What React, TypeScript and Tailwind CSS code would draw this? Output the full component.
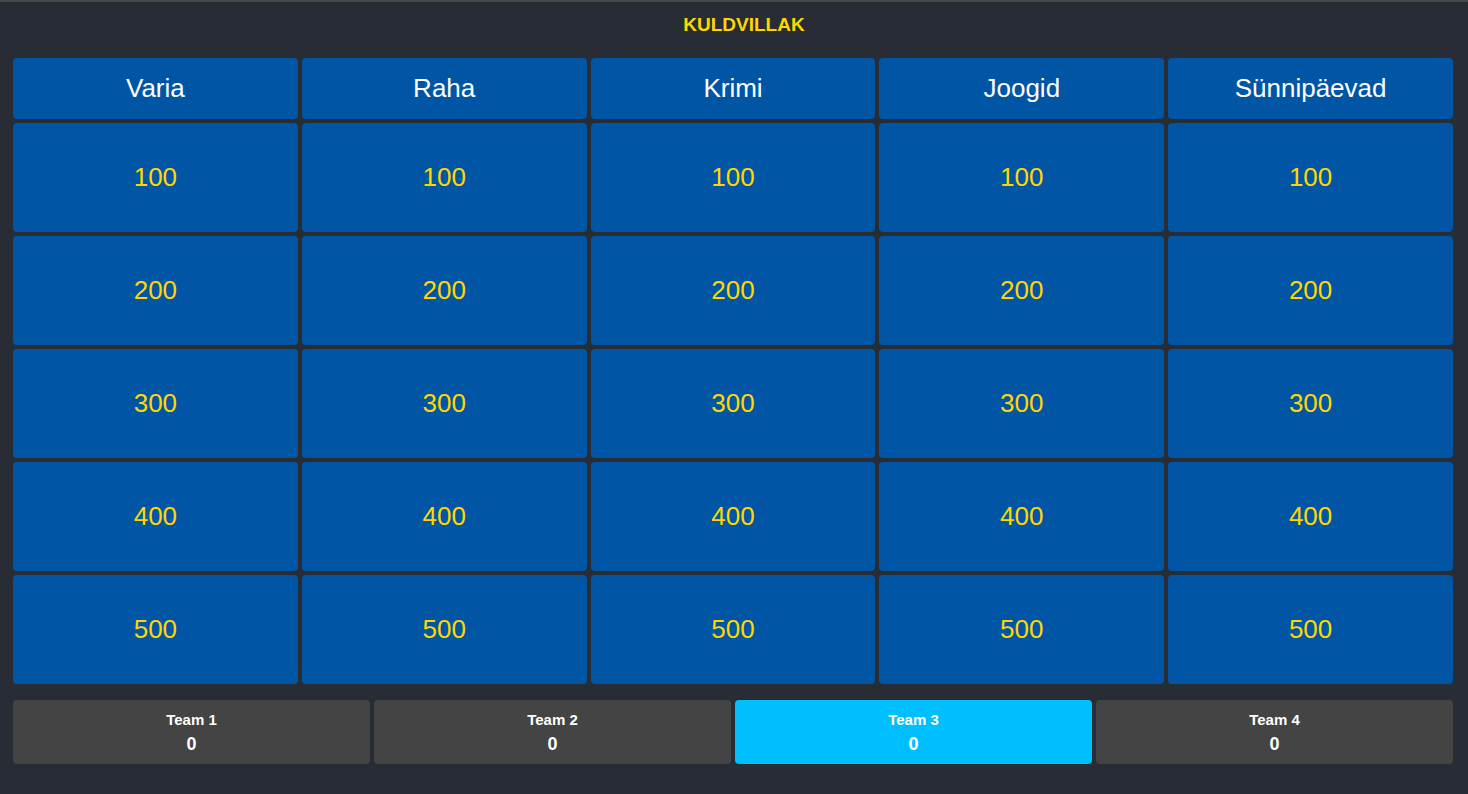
import React from 'react';

const categories = ['Varia', 'Raha', 'Krimi', 'Joogid', 'Sünnipäevad'];
const values = [100, 200, 300, 400, 500];
const teams = [
  { name: 'Team 1', score: 0 },
  { name: 'Team 2', score: 0 },
  { name: 'Team 3', score: 0 },
  { name: 'Team 4', score: 0 },
];

export default function App() {
  const active = 2;
  return (
    <div
      className="min-h-screen bg-[#282c34] border-t-2 border-[#474747] pl-[13px] pr-[15px] pb-[30px]"
      style={{ fontFamily: '"Liberation Sans", Arial, sans-serif' }}
    >
      <h1 className="pt-[12px] pl-[22px] text-center text-[19px] leading-[22px] font-bold text-[#ffd700]">KULDVILLAK</h1>

      <div className="mt-[22px] grid grid-cols-5 gap-1">
        {categories.map((c) => (
          <div
            key={c}
            className="h-[61px] flex items-center justify-center rounded bg-[#0055a4] text-white text-[26px]"
          >
            {c}
          </div>
        ))}
        {values.map((v) =>
          categories.map((c) => (
            <button
              key={c + v}
              className="h-[109px] flex items-center justify-center rounded bg-[#0055a4] text-[#ffd700] text-[26px]"
            >
              {v}
            </button>
          ))
        )}
      </div>

      <div className="mt-4 grid grid-cols-4 gap-1">
        {teams.map((t, i) => (
          <div
            key={t.name}
            className={`h-16 flex flex-col items-center justify-center rounded text-white font-bold ${
              i === active ? 'bg-[#00bfff]' : 'bg-[#444444]'
            }`}
          >
            <div className="text-[15px] leading-6">{t.name}</div>
            <div className="text-lg leading-6">{t.score}</div>
          </div>
        ))}
      </div>
    </div>
  );
}
